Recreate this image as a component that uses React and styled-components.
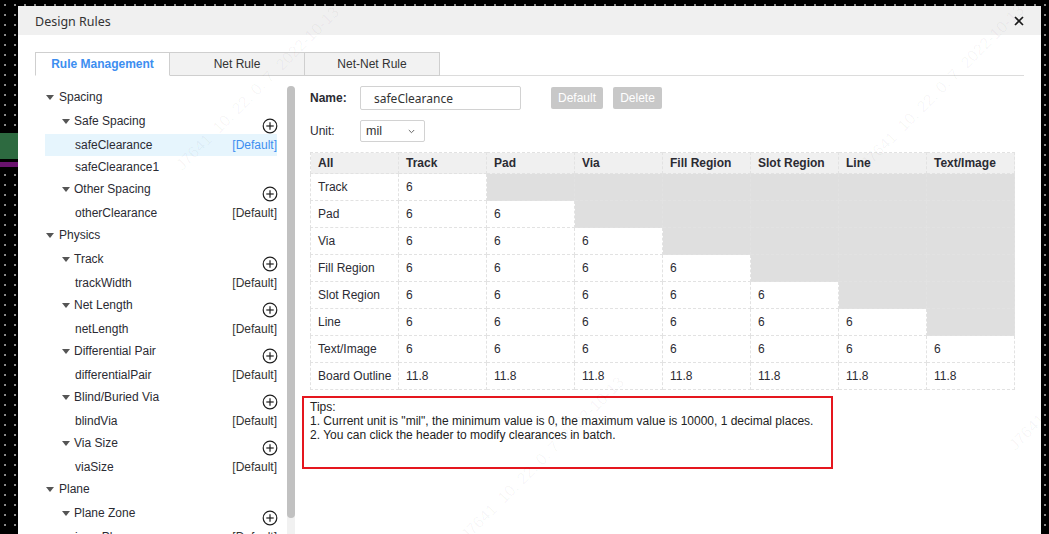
import React from "react";
import styled, { createGlobalStyle } from "styled-components";

const GlobalStyle = createGlobalStyle`
  html, body {
    margin: 0;
    padding: 0;
  }
  body {
    background-color: #000;
    background-image: radial-gradient(circle at 5px 5px, #8a8a8a 0.9px, transparent 1.3px);
    background-size: 10px 10px;
    font-family: "Liberation Sans", Arial, sans-serif;
    font-size: 12px;
    color: #333;
    overflow: hidden;
  }
  * { box-sizing: border-box; }
`;

const Page = styled.div`
  display: flex;
  align-items: flex-start;
  width: 1049px;
  height: 534px;
  overflow: hidden;
`;

const CanvasStrip = styled.div`
  width: 18px;
  flex: none;
  display: flex;
  flex-direction: column;
  gap: 3px;
  padding-top: 133px;
`;

const Trace = styled.div`
  height: ${(p) => p.$h}px;
  background: ${(p) => p.$color};
`;

const Dialog = styled.div`
  position: relative;
  margin-top: 6px;
  width: 1023px;
  height: 540px;
  background: #fff;
  display: flex;
  flex-direction: column;
  overflow: hidden;
`;

const TitleBar = styled.div`
  height: 29px;
  flex: none;
  background: #f0f0f0;
  display: flex;
  align-items: center;
  justify-content: space-between;
  padding: 1px 17px 0;
`;

const Title = styled.div`
  font-family: "Noto Sans", "Liberation Sans", sans-serif;
  font-size: 12.5px;
  color: #333;
`;

const CloseBtn = styled.div`
  width: 10px;
  height: 10px;
  display: flex;
`;

const Body = styled.div`
  flex: 1;
  display: flex;
  flex-direction: column;
  padding: 17px 17px 0;
  min-height: 0;
`;

const Tabs = styled.div`
  display: flex;
  height: 24px;
  border-bottom: 1px solid #dcdcdc;
  flex: none;
`;

const Tab = styled.div`
  width: 135px;
  height: 24px;
  display: flex;
  align-items: center;
  justify-content: center;
  border: 1px solid #cfcfcf;
  border-left: ${(p) => (p.$first ? "1px solid #cfcfcf" : "none")};
  border-bottom-color: ${(p) => (p.$active ? "#fff" : "#cfcfcf")};
  background: ${(p) => (p.$active ? "#fff" : "#f2f2f2")};
  color: ${(p) => (p.$active ? "#3d8ef0" : "#333")};
  font-weight: ${(p) => (p.$active ? "bold" : "normal")};
  font-size: 12px;
`;

const Content = styled.div`
  flex: 1;
  display: flex;
  padding-top: 10px;
  min-height: 0;
`;

const LeftPane = styled.div`
  width: 260px;
  flex: none;
  display: flex;
  gap: 10px;
`;

const Tree = styled.div`
  width: 242px;
  padding-left: 10px;
  display: flex;
  flex-direction: column;
`;

const HeaderRow = styled.div`
  height: 24px;
  flex: none;
  display: flex;
  align-items: flex-start;
  padding-left: ${(p) => (p.$level === 1 ? 1 : 17)}px;
`;

const Caret = styled.span`
  width: 0;
  height: 0;
  margin-top: 9px;
  border-left: 4.5px solid transparent;
  border-right: 4.5px solid transparent;
  border-top: 5px solid #555;
  flex: none;
`;

const HeaderLabel = styled.span`
  line-height: 22px;
  margin-left: ${(p) => (p.$level === 1 ? 5 : 4)}px;
  color: #2b2b33;
  flex: 1;
`;

const AddIcon = styled.svg`
  width: 16px;
  height: 16px;
  margin-top: 8px;
  margin-right: -1px;
  flex: none;
`;

const ItemRow = styled.div`
  height: 22px;
  flex: none;
  display: flex;
  align-items: center;
  justify-content: space-between;
  padding-left: 30px;
  background: ${(p) => (p.$selected ? "#e6f5fd" : "transparent")};
  color: #2b2b33;
`;

const DefaultTag = styled.span`
  color: ${(p) => (p.$selected ? "#3d8ef0" : "#333")};
`;

const ScrollTrack = styled.div`
  width: 8px;
  flex: none;
  background: #f1f1f1;
  border-radius: 4px;
  display: flex;
  flex-direction: column;
`;

const ScrollThumb = styled.div`
  height: 432px;
  flex: none;
  background: #c1c1c1;
  border-radius: 4px;
`;

const RightPane = styled.div`
  margin-left: 7px;
  flex: 1;
  display: flex;
  flex-direction: column;
`;

const FormRow = styled.div`
  display: flex;
  flex: none;
  align-items: center;
  padding-left: 8px;
  height: ${(p) => p.$h}px;
  margin-top: ${(p) => p.$mt || 0}px;
`;

const Label = styled.div`
  width: 50px;
  font-weight: ${(p) => (p.$bold ? "bold" : "normal")};
  color: #2b2b33;
`;

const NameInput = styled.div`
  width: 161px;
  height: 24px;
  border: 1px solid #d2d2d2;
  border-radius: 2px;
  padding-left: 13px;
  display: flex;
  align-items: center;
  font-family: "Noto Sans", "Liberation Sans", sans-serif;
  font-size: 12px;
  color: #333;
`;

const GrayButton = styled.div`
  height: 22px;
  width: ${(p) => p.$w}px;
  margin-left: ${(p) => p.$ml}px;
  background: #c8c8c8;
  color: #fff;
  border-radius: 2px;
  display: flex;
  align-items: center;
  justify-content: center;
  font-size: 12px;
`;

const Select = styled.div`
  width: 65px;
  height: 22px;
  border: 1px solid #d2d2d2;
  border-radius: 2px;
  display: flex;
  align-items: center;
  justify-content: space-between;
  padding: 0 9px 0 5px;
  font-size: 12.5px;
  color: #333;
`;

const Chevron = styled.svg`
  width: 7px;
  height: 5px;
`;

const TableWrap = styled.div`
  margin-top: 10px;
  padding-left: 8px;
  flex: none;
`;

const Table = styled.table`
  border-collapse: collapse;
  table-layout: fixed;
  width: 704px;
  font-size: 12px;
`;

const Th = styled.th`
  width: 88px;
  height: 21px;
  padding: 0 0 0 7px;
  text-align: left;
  font-weight: bold;
  color: #2b2b33;
  background: #f0f0f0;
  border: 1px dashed #e2e2e2;
`;

const Td = styled.td`
  height: 27px;
  padding: 0 0 0 7px;
  color: #2b2b33;
  background: ${(p) => (p.$disabled ? "#dfdfdf" : "#fff")};
  border: 1px dashed #e2e2e2;
`;

const Tips = styled.div`
  margin-top: 6px;
  flex: none;
  width: 531px;
  height: 73px;
  border: 2px solid #e5161e;
  padding: 2px 6px;
  font-size: 12px;
  line-height: 14px;
  color: #222;
`;

const WatermarkLayer = styled.div`
  position: absolute;
  inset: 0;
  pointer-events: none;
  overflow: hidden;
`;

const Watermark = styled.span`
  position: absolute;
  white-space: nowrap;
  font-family: "Liberation Sans", sans-serif;
  font-size: 16px;
  color: rgba(0, 0, 0, 0.04);
  transform-origin: 0 100%;
  transform: rotate(-45deg);
`;

const Plus = () => (
  <AddIcon viewBox="0 0 16 16">
    <circle cx="8" cy="8" r="6.8" fill="none" stroke="#1e1e1e" strokeWidth="1.2" />
    <line x1="4.3" y1="8" x2="11.7" y2="8" stroke="#1e1e1e" strokeWidth="1.2" />
    <line x1="8" y1="4.3" x2="8" y2="11.7" stroke="#1e1e1e" strokeWidth="1.2" />
  </AddIcon>
);

const tree = [
  {
    name: "Spacing",
    subs: [
      {
        name: "Safe Spacing",
        items: [
          { name: "safeClearance", def: true, selected: true },
          { name: "safeClearance1", def: false },
        ],
      },
      { name: "Other Spacing", items: [{ name: "otherClearance", def: true }] },
    ],
  },
  {
    name: "Physics",
    subs: [
      { name: "Track", items: [{ name: "trackWidth", def: true }] },
      { name: "Net Length", items: [{ name: "netLength", def: true }] },
      { name: "Differential Pair", items: [{ name: "differentialPair", def: true }] },
      { name: "Blind/Buried Via", items: [{ name: "blindVia", def: true }] },
      { name: "Via Size", items: [{ name: "viaSize", def: true }] },
    ],
  },
  {
    name: "Plane",
    subs: [{ name: "Plane Zone", items: [{ name: "innerPlane", def: true }] }],
  },
];

const cols = ["Track", "Pad", "Via", "Fill Region", "Slot Region", "Line", "Text/Image"];
const rows = [...cols, "Board Outline"];

const watermarks = [
  { x: 167, y: 150 },
  { x: 852, y: 148 },
  { x: 452, y: 520 },
  { x: -190, y: 470 },
  { x: -40, y: 690 },
  { x: 1000, y: 430 },
];

export default function App() {
  return (
    <>
      <GlobalStyle />
      <Page>
        <CanvasStrip>
          <Trace $h={26} $color="#2d6a40" />
          <Trace $h={5} $color="#6a136e" />
        </CanvasStrip>
        <Dialog>
          <TitleBar>
            <Title>Design Rules</Title>
            <CloseBtn>
              <svg width="10" height="10" viewBox="0 0 10 10">
                <path d="M1 1 L9 9 M9 1 L1 9" stroke="#1a1a1a" strokeWidth="1.7" />
              </svg>
            </CloseBtn>
          </TitleBar>
          <Body>
            <Tabs>
              <Tab $first $active>Rule Management</Tab>
              <Tab>Net Rule</Tab>
              <Tab>Net-Net Rule</Tab>
            </Tabs>
            <Content>
              <LeftPane>
                <Tree>
                  {tree.map((g) => (
                    <React.Fragment key={g.name}>
                      <HeaderRow $level={1}>
                        <Caret />
                        <HeaderLabel $level={1}>{g.name}</HeaderLabel>
                      </HeaderRow>
                      {g.subs.map((s) => (
                        <React.Fragment key={s.name}>
                          <HeaderRow $level={2}>
                            <Caret />
                            <HeaderLabel $level={2}>{s.name}</HeaderLabel>
                            <Plus />
                          </HeaderRow>
                          {s.items.map((it) => (
                            <ItemRow key={it.name} $selected={it.selected}>
                              <span>{it.name}</span>
                              {it.def && <DefaultTag $selected={it.selected}>[Default]</DefaultTag>}
                            </ItemRow>
                          ))}
                        </React.Fragment>
                      ))}
                    </React.Fragment>
                  ))}
                </Tree>
                <ScrollTrack>
                  <ScrollThumb />
                </ScrollTrack>
              </LeftPane>
              <RightPane>
                <FormRow $h={24}>
                  <Label $bold>Name:</Label>
                  <NameInput>safeClearance</NameInput>
                  <GrayButton $w={52} $ml={30}>Default</GrayButton>
                  <GrayButton $w={49} $ml={10}>Delete</GrayButton>
                </FormRow>
                <FormRow $h={22} $mt={10}>
                  <Label>Unit:</Label>
                  <Select>
                    <span>mil</span>
                    <Chevron viewBox="0 0 7 5">
                      <path d="M0.8 1 L3.5 3.7 L6.2 1" fill="none" stroke="#666" strokeWidth="1" />
                    </Chevron>
                  </Select>
                </FormRow>
                <TableWrap>
                  <Table>
                    <thead>
                      <tr>
                        <Th>All</Th>
                        {cols.map((c) => (
                          <Th key={c}>{c}</Th>
                        ))}
                      </tr>
                    </thead>
                    <tbody>
                      {rows.map((r, i) => (
                        <tr key={r}>
                          <Td>{r}</Td>
                          {cols.map((c, j) => {
                            const disabled = i < 7 && j > i;
                            return (
                              <Td key={c} $disabled={disabled}>
                                {disabled ? "" : i === 7 ? "11.8" : "6"}
                              </Td>
                            );
                          })}
                        </tr>
                      ))}
                    </tbody>
                  </Table>
                </TableWrap>
                <Tips>
                  <div>Tips:</div>
                  <div>1. Current unit is "mil", the minimum value is 0, the maximum value is 10000, 1 decimal places.</div>
                  <div>2. You can click the header to modify clearances in batch.</div>
                </Tips>
              </RightPane>
            </Content>
          </Body>
          <WatermarkLayer>
            {watermarks.map((w, i) => (
              <Watermark key={i} style={{ left: w.x, top: w.y }}>
                J7641&nbsp;&nbsp;10. 22. 0. 7&nbsp;&nbsp;2022-10-13
              </Watermark>
            ))}
          </WatermarkLayer>
        </Dialog>
      </Page>
    </>
  );
}
